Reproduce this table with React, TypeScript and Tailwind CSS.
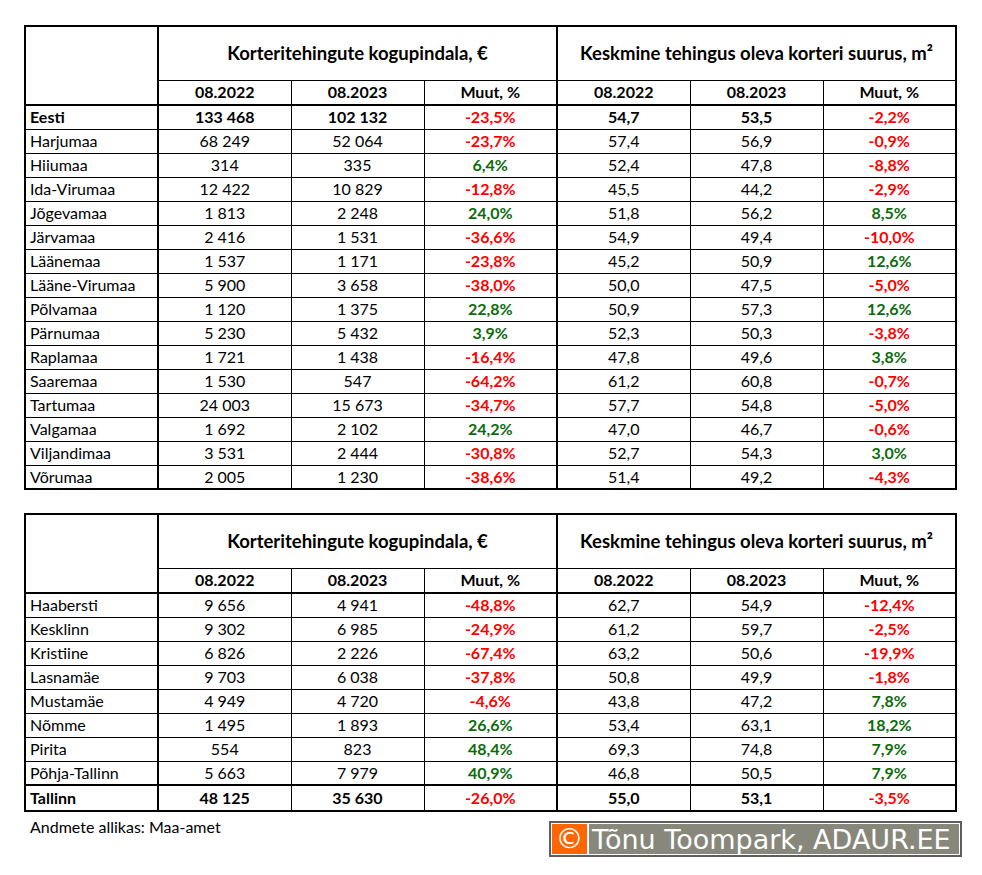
import React from "react";

type Row = [string, string, string, string, string, string, string];

const counties: Row[] = [
  ["Eesti", "133 468", "102 132", "-23,5%", "54,7", "53,5", "-2,2%"],
  ["Harjumaa", "68 249", "52 064", "-23,7%", "57,4", "56,9", "-0,9%"],
  ["Hiiumaa", "314", "335", "6,4%", "52,4", "47,8", "-8,8%"],
  ["Ida-Virumaa", "12 422", "10 829", "-12,8%", "45,5", "44,2", "-2,9%"],
  ["Jõgevamaa", "1 813", "2 248", "24,0%", "51,8", "56,2", "8,5%"],
  ["Järvamaa", "2 416", "1 531", "-36,6%", "54,9", "49,4", "-10,0%"],
  ["Läänemaa", "1 537", "1 171", "-23,8%", "45,2", "50,9", "12,6%"],
  ["Lääne-Virumaa", "5 900", "3 658", "-38,0%", "50,0", "47,5", "-5,0%"],
  ["Põlvamaa", "1 120", "1 375", "22,8%", "50,9", "57,3", "12,6%"],
  ["Pärnumaa", "5 230", "5 432", "3,9%", "52,3", "50,3", "-3,8%"],
  ["Raplamaa", "1 721", "1 438", "-16,4%", "47,8", "49,6", "3,8%"],
  ["Saaremaa", "1 530", "547", "-64,2%", "61,2", "60,8", "-0,7%"],
  ["Tartumaa", "24 003", "15 673", "-34,7%", "57,7", "54,8", "-5,0%"],
  ["Valgamaa", "1 692", "2 102", "24,2%", "47,0", "46,7", "-0,6%"],
  ["Viljandimaa", "3 531", "2 444", "-30,8%", "52,7", "54,3", "3,0%"],
  ["Võrumaa", "2 005", "1 230", "-38,6%", "51,4", "49,2", "-4,3%"],
];

const tallinn: Row[] = [
  ["Haabersti", "9 656", "4 941", "-48,8%", "62,7", "54,9", "-12,4%"],
  ["Kesklinn", "9 302", "6 985", "-24,9%", "61,2", "59,7", "-2,5%"],
  ["Kristiine", "6 826", "2 226", "-67,4%", "63,2", "50,6", "-19,9%"],
  ["Lasnamäe", "9 703", "6 038", "-37,8%", "50,8", "49,9", "-1,8%"],
  ["Mustamäe", "4 949", "4 720", "-4,6%", "43,8", "47,2", "7,8%"],
  ["Nõmme", "1 495", "1 893", "26,6%", "53,4", "63,1", "18,2%"],
  ["Pirita", "554", "823", "48,4%", "69,3", "74,8", "7,9%"],
  ["Põhja-Tallinn", "5 663", "7 979", "40,9%", "46,8", "50,5", "7,9%"],
  ["Tallinn", "48 125", "35 630", "-26,0%", "55,0", "53,1", "-3,5%"],
];

function Change({ v }: { v: string }) {
  const neg = v.startsWith("-");
  return <span className={`font-bold ${neg ? "text-[#ff0000]" : "text-[#0c6b0c]"}`}>{v}</span>;
}

function DataRow({ r, bold, thickTop }: { r: Row; bold?: boolean; thickTop?: boolean }) {
  const top = thickTop ? "border-t-2" : "";
  const w = bold ? "font-bold" : "";
  return (
    <tr className={thickTop ? "h-[26px]" : "h-[24px]"}>
      <td className={`border border-black border-r-2 border-l-2 pl-[4px] text-left ${top} ${w}`}>{r[0]}</td>
      <td className={`border border-black text-center ${top} ${w}`}>{r[1]}</td>
      <td className={`border border-black text-center ${top} ${w}`}>{r[2]}</td>
      <td className={`border border-black border-r-2 text-center ${top}`}>
        <Change v={r[3]} />
      </td>
      <td className={`border border-black text-center ${top} ${w}`}>{r[4]}</td>
      <td className={`border border-black text-center ${top} ${w}`}>{r[5]}</td>
      <td className={`border border-black border-r-2 text-center ${top}`}>
        <Change v={r[6]} />
      </td>
    </tr>
  );
}

function Table({ rows, boldFirst, boldLast }: { rows: Row[]; boldFirst?: boolean; boldLast?: boolean }) {
  return (
    <table className="w-[932px] table-fixed border-collapse border-2 border-black text-[16px] leading-none text-black">
      <colgroup>
        {[0, 1, 2, 3, 4, 5, 6].map((i) => (
          <col key={i} className="w-[133px]" />
        ))}
      </colgroup>
      <thead>
        <tr className="h-[54px]">
          <th rowSpan={2} className="border-2 border-black" />
          <th colSpan={3} className="border-2 border-black border-b text-[18.5px] font-bold">
            Korteritehingute kogupindala, €
          </th>
          <th colSpan={3} className="border-2 border-black border-b text-[18.5px] font-bold">
            Keskmine tehingus oleva korteri suurus, m²
          </th>
        </tr>
        <tr className="h-[25px]">
          <th className="border border-black border-b-2 font-bold">08.2022</th>
          <th className="border border-black border-b-2 font-bold">08.2023</th>
          <th className="border border-black border-b-2 border-r-2 font-bold">Muut, %</th>
          <th className="border border-black border-b-2 font-bold">08.2022</th>
          <th className="border border-black border-b-2 font-bold">08.2023</th>
          <th className="border border-black border-b-2 border-r-2 font-bold">Muut, %</th>
        </tr>
      </thead>
      <tbody>
        {rows.map((r, i) => (
          <DataRow
            key={r[0]}
            r={r}
            bold={(boldFirst && i === 0) || (boldLast && i === rows.length - 1)}
            thickTop={boldLast && i === rows.length - 1}
          />
        ))}
      </tbody>
    </table>
  );
}

export default function App() {
  return (
    <div className="h-[875px] w-[982px] bg-white pl-[24px] pt-[25px] font-['Lato','Open_Sans',sans-serif]">
      <Table rows={counties} boldFirst />
      <div className="mt-[23px]">
        <Table rows={tallinn} boldLast />
      </div>
      <div className="mt-[5px] flex w-[938px] items-start justify-between">
        <div className="pl-[6px] text-[16px] leading-[20px] text-black">Andmete allikas: Maa-amet</div>
        <div className="mt-[4px] flex h-[36px] w-[413px] border-2 border-[#5e5e5e] bg-white p-[1px]">
          <div className="flex w-[35px] items-center justify-center bg-[#ff6600] font-['DejaVu_Sans',sans-serif] text-[28px] leading-none text-white">
            ©
          </div>
          <div className="ml-[2px] flex flex-1 items-center bg-[#87877b] pl-[3px] font-['DejaVu_Sans',sans-serif] text-[27px] leading-none text-white">
            Tõnu Toompark, ADAUR.EE
          </div>
        </div>
      </div>
    </div>
  );
}
